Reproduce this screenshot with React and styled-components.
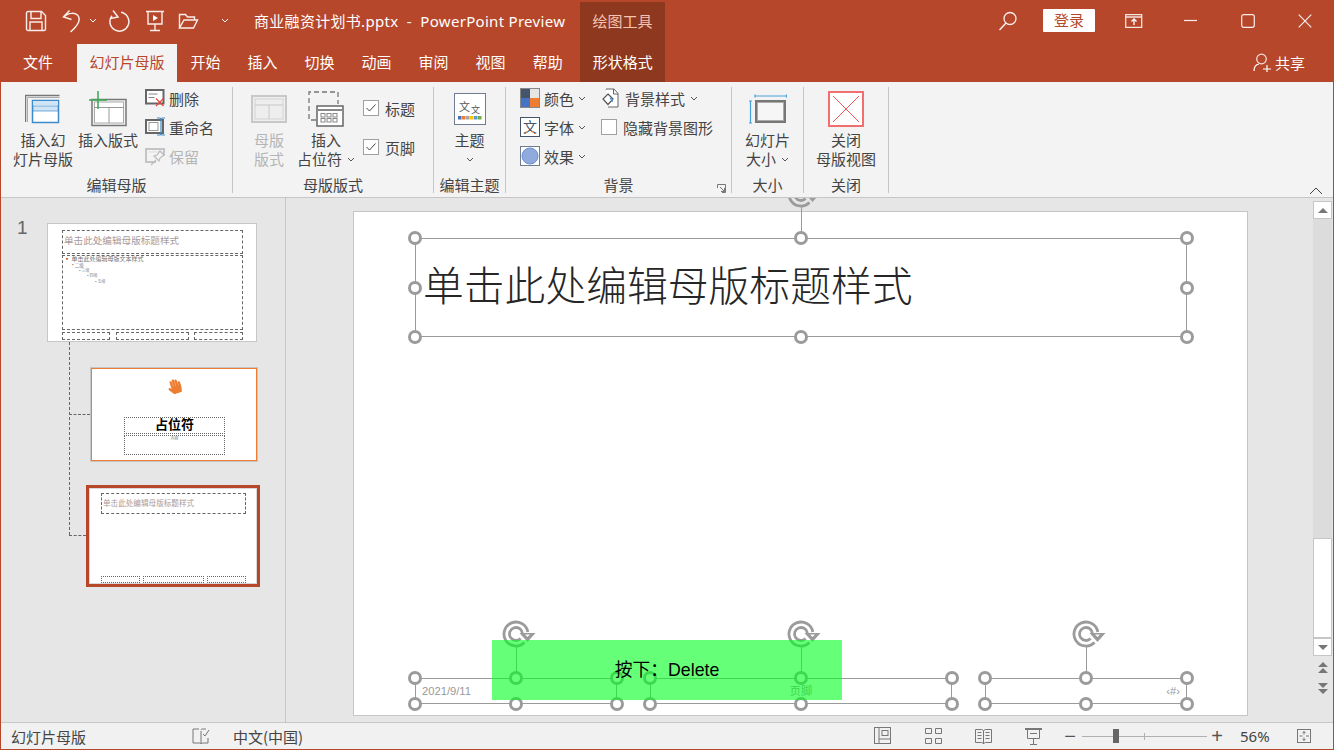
import React from "react";
import styled, { createGlobalStyle } from "styled-components";
import { FaHandPaper } from "react-icons/fa";

const RUST = "#b7472a";
const GRAY = "#9b9b9b";

const GlobalStyle = createGlobalStyle`
	html, body, #root {
		margin: 0;
		padding: 0;
		height: 100%;
		overflow: hidden;
	}
	body {
		font-family: "Noto Sans", "Noto Sans CJK SC", sans-serif;
		font-size: 15px;
		color: #444;
	}
`;

const Svg = ({ w, h, children }) => (
	<svg width={w} height={h} viewBox={`0 0 ${w} ${h}`} fill="none" style={{ display: "block", flex: "none" }}>
		{children}
	</svg>
);

const Chevron = ({ color = "#555" }) => (
	<Svg w={8} h={5}>
		<path d="M1 1l3 3 3-3" stroke={color} />
	</Svg>
);

/* title bar icons */
const SaveIcon = () => (
	<Svg w={22} h={22}>
		<path d="M3 1.500h13.500l4 4V19a1.500 1.500 0 0 1-1.500 1.500H3A1.500 1.500 0 0 1 1.500 19V3A1.500 1.500 0 0 1 3 1.500z" stroke="#fff" opacity=".9" strokeWidth="1.400" />
		<path d="M6 2v6.500h10V2M5 20v-8h12v8" stroke="#fff" opacity=".9" strokeWidth="1.400" />
	</Svg>
);
const UndoIcon = () => (
	<Svg w={20} h={24}>
		<path d="M7.500 1.500L1.500 8l8 2.500M2 8C6 3.500 14 3 16.500 7.500c2.500 5-1.500 10-8 15.500" stroke="#fff" opacity=".9" strokeWidth="1.500" />
	</Svg>
);
const RedoIcon = () => (
	<Svg w={22} h={22}>
		<path d="M13 2.300a9.500 9.500 0 1 1-9 3.400" stroke="#fff" opacity=".9" strokeWidth="1.500" />
		<path d="M5 .5l5 6.500-7.500 1.500" stroke="#fff" opacity=".9" strokeWidth="1.500" />
	</Svg>
);
const PresentIcon = () => (
	<Svg w={20} h={22}>
		<path d="M1 1.500h18M3 2v12h14V2M10 14v6M5 20.500h10" stroke="#fff" opacity=".9" strokeWidth="1.400" />
		<path d="M8 5l5 3-5 3z" fill="#fff" />
	</Svg>
);
const FolderIcon = () => (
	<Svg w={21} h={18}>
		<path d="M1.500 16V2.500h6l2 2.500h7v3M1.500 16h14l4-8H6l-4.500 8z" stroke="#fff" opacity=".9" strokeWidth="1.400" />
	</Svg>
);
const SearchIcon = () => (
	<Svg w={20} h={20}>
		<circle cx="12" cy="7.500" r="6" stroke="#fff" opacity=".9" strokeWidth="1.300" />
		<path d="M8 12l-6.500 7" stroke="#fff" opacity=".9" strokeWidth="1.500" />
	</Svg>
);
const RibbonModeIcon = () => (
	<Svg w={18} h={14}>
		<path d="M.7.7h16v12.600H.7zM1 3h16" stroke="#fff" opacity=".85" strokeWidth="1.300" />
		<path d="M9 11V5.500M6.500 7.500L9 5l2.500 2.500" stroke="#fff" strokeWidth="1.300" />
	</Svg>
);
const MinIcon = () => (
	<Svg w={14} h={14}>
		<path d="M0 6.500h13" stroke="#fff" opacity=".9" strokeWidth="1.200" />
	</Svg>
);
const MaxIcon = () => (
	<Svg w={14} h={14}>
		<rect x=".7" y=".7" width="12.600" height="12.600" rx="2" stroke="#fff" opacity=".9" strokeWidth="1.200" />
	</Svg>
);
const CloseIcon = () => (
	<Svg w={14} h={14}>
		<path d="M.700.700l12.600 12.600M13.300.700L.700 13.300" stroke="#fff" opacity=".9" strokeWidth="1.200" />
	</Svg>
);
const ShareIcon = () => (
	<Svg w={19} h={19}>
		<circle cx="8.500" cy="6" r="4.800" stroke="#fff" opacity=".85" strokeWidth="1.200" />
		<path d="M1 18c0-4 2-6.500 5-7M10 16h8M14 12v7" stroke="#fff" strokeWidth="1.200" />
	</Svg>
);

/* ribbon icons */
const InsertMasterIcon = () => (
	<Svg w={36} h={30}>
		<path d="M.5 28V1.500h34" stroke="#777" strokeWidth="1.500" />
		<path d="M2.500 28V3.500h32" stroke="#aaa" />
		<rect x="7.500" y="6.500" width="26" height="22" fill="#fff" stroke="#3d8bcb" strokeWidth="1.500" />
		<rect x="8" y="7" width="25" height="4" fill="#cfe4f5" />
		<rect x="8" y="12" width="25" height="5" fill="#cfe4f5" stroke="#3d8bcb" strokeWidth=".7" />
	</Svg>
);
const InsertLayoutIcon = () => (
	<Svg w={38} h={36}>
		<rect x="3" y="8.500" width="34" height="26" fill="#f3f3f3" stroke="#777" strokeWidth="1.500" />
		<rect x="5.500" y="11" width="29" height="21" fill="#fff" stroke="#aaa" />
		<path d="M5 16.500h30M20 17v15" stroke="#999" />
		<path d="M9 0v18M0 9h18" stroke="#3aa655" strokeWidth="1.500" />
	</Svg>
);
const DeleteIcon = () => (
	<Svg w={20} h={18}>
		<rect x="1" y="1" width="17.500" height="13.500" fill="#fff" stroke="#666" strokeWidth="2" />
		<path d="M3.500 5h9M3.500 8.500h6" stroke="#888" />
		<path d="M11 9.500l7.500 7.500M18.500 9.500L11 17" stroke="#e8443a" strokeWidth="1.200" />
	</Svg>
);
const RenameIcon = () => (
	<Svg w={20} h={20}>
		<rect x="1" y="3" width="17" height="13" fill="#fff" stroke="#666" strokeWidth="2" />
		<rect x="4" y="5.500" width="9" height="8" stroke="#999" />
		<path d="M12 1h2.500c1 0 1.500.5 1.500 1.500v14c0 1-.5 1.500-1.500 1.500H12M20 1h-2.500c-1 0-1.500.5-1.500 1.500v14c0 1 .5 1.500 1.500 1.500H20" stroke="#3d8bcb" strokeWidth="1.200" />
	</Svg>
);
const KeepIcon = () => (
	<Svg w={20} h={19}>
		<path d="M11 15H1V2h18v7" stroke="#c4c4c4" strokeWidth="2" />
		<path d="M3.500 5h13" stroke="#ddd" />
		<path d="M6 18l5-5M9 9l5 5 1-3 4-3-4-4-3 4z" stroke="#bbb" strokeWidth="1.200" />
	</Svg>
);
const MasterLayoutIcon = () => (
	<Svg w={36} h={28}>
		<rect x="1" y="1" width="34" height="26" fill="#eee" stroke="#c8c8c8" strokeWidth="2" />
		<rect x="4" y="4" width="28" height="20" stroke="#d4d4d4" />
		<path d="M4 10h28M18 10v14" stroke="#c8c8c8" />
	</Svg>
);
const PlaceholderIcon = () => (
	<Svg w={36} h={36}>
		<path d="M8 29H1V1h29v12" stroke="#777" strokeWidth="1.300" strokeDasharray="5 3" />
		<rect x="9" y="15" width="26" height="20" fill="#fff" stroke="#666" strokeWidth="1.500" />
		<path d="M9 19h26" stroke="#888" strokeWidth="2" />
		{[13, 19, 25].map((x) => [22.5, 27.5].map((y) => (
			<rect key={`${x}${y}`} x={x} y={y} width="4" height="3.500" fill="#fff" stroke="#888" />
		)))}
	</Svg>
);
const ThemeIcon = () => (
	<Svg w={32} h={32}>
		<rect x=".5" y=".5" width="31" height="31" fill="#fff" stroke="#6f7d92" />
		<text x="5" y="18" fontSize="11" fill="#555" fontFamily="Noto Sans CJK SC">文</text>
		<text x="17" y="20" fontSize="9" fill="#555" fontFamily="Noto Sans CJK SC">文</text>
		{["#4472c4", "#ed7d31", "#a5a5a5", "#ffc000", "#5b9bd5", "#70ad47"].map((c, i) => (
			<rect key={c} x={4 + i * 4} y="23" width="3.500" height="3.500" fill={c} />
		))}
	</Svg>
);
const ColorsIcon = () => (
	<Svg w={20} h={20}>
		<rect width="10" height="10" fill="#44546a" />
		<rect x="10" width="10" height="10" fill="#e7e6e6" />
		<rect y="10" width="10" height="10" fill="#4472c4" />
		<rect x="10" y="10" width="10" height="10" fill="#ed7d31" />
		<rect x=".5" y=".5" width="19" height="19" stroke="#888" />
	</Svg>
);
const FontsIcon = () => (
	<Svg w={20} h={20}>
		<rect x=".5" y=".5" width="19" height="19" fill="#fff" stroke="#44546a" />
		<text x="3" y="15" fontSize="14" fill="#44546a" fontFamily="Noto Sans CJK SC">文</text>
		<path d="M5 17l3-3M15 17l-3-3" stroke="#ed7d31" />
	</Svg>
);
const EffectsIcon = () => (
	<Svg w={20} h={20}>
		<rect x=".5" y=".5" width="19" height="19" fill="#fff" stroke="#6f7d92" />
		<circle cx="10" cy="10" r="8" fill="#8faadc" stroke="#6d8fd0" />
	</Svg>
);
const BackgroundIcon = () => (
	<Svg w={19} h={20}>
		<path d="M5 1.500V1h8l4 4.500V19H7" fill="#fff" stroke="#666" />
		<path d="M12.500 1v5H17" stroke="#666" />
		<path d="M7 6l5 5-5 5.500-5-5.500z" fill="#fff" stroke="#555" strokeWidth="1.200" />
		<path d="M9 10c2 1 3 2 2 4" stroke="#5b9bd5" strokeWidth="1.500" />
	</Svg>
);
const SlideSizeIcon = () => (
	<Svg w={38} h={30}>
		<path d="M6 2h32M6 .5v3M37.500.5v3M1.500 7v22M0 7h3M0 29h3" stroke="#46a0dc" strokeWidth="1.200" />
		<rect x="6" y="6" width="31" height="23" fill="#777" />
		<rect x="8.500" y="8.500" width="26" height="18" fill="#f6f6f6" stroke="#aaa" />
	</Svg>
);
const CloseViewIcon = () => (
	<Svg w={36} h={36}>
		<rect x="1" y="1" width="34" height="34" fill="#fff" stroke="#f07070" strokeWidth="2" />
		<path d="M5 5l26 26M31 5L5 31" stroke="#f05a5a" />
	</Svg>
);
const LauncherIcon = () => (
	<Svg w={9} h={9}>
		<path d="M.5 4V.5H8.500V8.500H5M3 3l4.500 4.500M7.500 4v3.500H4" stroke="#777" />
	</Svg>
);

/* status bar icons */
const NotesIcon = () => (
	<Svg w={18} h={18}>
		<path d="M7 2H1v14h6c1 0 2 .5 2 1M9 4v13M9 3c0-1 1-1 2-1h3M16 11v5h-5c-1 0-2 .5-2 1" stroke="#777" />
		<path d="M11 7l2 2 4-6" stroke="#777" />
	</Svg>
);
const NormalViewIcon = () => (
	<Svg w={18} h={18}>
		<rect x=".5" y=".5" width="16" height="16" stroke="#777" />
		<path d="M5 1v15M5 12h12" stroke="#777" />
		<rect x="8" y="3.500" width="6" height="5" stroke="#777" />
	</Svg>
);
const SorterIcon = () => (
	<Svg w={17} h={16}>
		<path d="M.5.5h6v5h-6zM10.500.5h6v5h-6zM.5 10.500h6v5h-6zM10.500 10.500h6v5h-6z" stroke="#777" />
	</Svg>
);
const ReadingIcon = () => (
	<Svg w={17} h={17}>
		<path d="M.5 1.500h6l2 1 2-1h6v13h-6l-2 1-2-1h-6zM8.500 3v13M2.500 4.500h4M2.500 7.500h4M2.500 10.500h4M10.500 4.500h4M10.500 7.500h4M10.500 10.500h4" stroke="#777" />
	</Svg>
);
const SlideShowIcon = () => (
	<Svg w={17} h={17}>
		<path d="M0 1h17" stroke="#777" strokeWidth="2" />
		<path d="M2.500 2v8.500h12V2M8.500 10.500V16M5 16.500h7M5 5.500h7" stroke="#777" />
	</Svg>
);
const FitIcon = () => (
	<Svg w={14} h={14}>
		<rect x=".5" y=".5" width="13" height="13" stroke="#777" />
		<path d="M7 2.500v3M5.500 4L7 2.500 8.500 4M7 11.500v-3M5.500 10L7 11.500 8.500 10M2.500 7h3M9 7h3" stroke="#777" />
	</Svg>
);
const RotateIcon = () => (
	<Svg w={34} h={30}>
		<path d="M22.500 23.500A12 12 0 1 1 25.800 12.900" stroke={GRAY} strokeWidth="2.800" />
		<path d="M18.600 19.600A6.500 6.500 0 1 1 20.400 13.900" stroke={GRAY} strokeWidth="2.800" />
		<path d="M17.500 14h16l-8 9z" fill={GRAY} />
		<path d="M23 15.500h5l-2.500 2.500z" fill="#fff" />
	</Svg>
);

const Window = styled.div`
	width: 100vw;
	height: 100vh;
	box-sizing: border-box;
	padding: 0 1px 1px;
	background: ${RUST};
	display: flex;
	flex-direction: column;
	overflow: hidden;
`;

const TitleBar = styled.div`
	height: 44px;
	flex: none;
	display: flex;
	color: #fff;
`;

const QuickBar = styled.div`
	width: 253px;
	box-sizing: border-box;
	padding: 0 0 3px 24px;
	display: flex;
	align-items: center;
`;

const QuickButton = styled.div`
	margin-right: ${(p) => p.$gap}px;
	display: flex;
	align-items: center;
`;

const DocTitle = styled.div`
	width: 326px;
	line-height: 42px;
	letter-spacing: 0.3px;
	white-space: pre;
	color: #fff;
`;

const ContextTitle = styled.div`
	width: 85px;
	margin-top: 2px;
	background: #8f3820;
	color: #f4c4b0;
	text-align: center;
	line-height: 38px;
`;

const TitleRight = styled.div`
	margin-left: auto;
	padding-bottom: 3px;
	display: flex;
	align-items: center;
`;

const SearchButton = styled.div`
	width: 30px;
	margin-right: 20px;
	display: flex;
	justify-content: center;
`;

const LoginButton = styled.div`
	width: 52px;
	height: 23px;
	margin-right: 10px;
	border-radius: 1px;
	background: #fff;
	color: ${RUST};
	text-align: center;
	line-height: 23px;
`;

const WindowButton = styled.div`
	width: 57px;
	display: flex;
	justify-content: center;
`;

const TabBar = styled.div`
	height: 38px;
	flex: none;
	display: flex;
	color: #fff;
	padding-left: 8px;
`;

const Tab = styled.div`
	padding: 0 ${(p) => p.$pad ?? 13.5}px;
	margin-right: ${(p) => p.$after ?? 0}px;
	line-height: 36px;
	white-space: nowrap;
	background: ${(p) => (p.$active ? "#f3f3f3" : p.$context ? "#8f3820" : "transparent")};
	color: ${(p) => (p.$active ? RUST : "#fff")};
`;

const ShareButton = styled.div`
	margin-left: auto;
	margin-right: 28px;
	padding-bottom: 1px;
	display: flex;
	align-items: center;
	gap: 3px;
`;

const Ribbon = styled.div`
	height: 116px;
	flex: none;
	box-sizing: border-box;
	position: relative;
	display: flex;
	padding-top: 5px;
	background: #f3f3f3;
	border-bottom: 1px solid #c6c6c6;
`;

const Group = styled.div`
	width: ${(p) => p.$w}px;
	height: 106px;
	flex: none;
	box-sizing: border-box;
	position: relative;
	border-right: 1px solid #c6c6c6;
`;

const GroupBody = styled.div`
	height: 89px;
	display: flex;
	padding-left: ${(p) => p.$pad ?? 0}px;
`;

const GroupLabel = styled.div`
	line-height: 19px;
	text-align: center;
	white-space: nowrap;
`;

const Launcher = styled.div`
	position: absolute;
	right: 5px;
	bottom: 0;
`;

const BigButton = styled.div`
	width: ${(p) => p.$w}px;
	margin-left: ${(p) => p.$left ?? 0}px;
	flex: none;
	display: flex;
	flex-direction: column;
	align-items: center;
	line-height: 19px;
	text-align: center;
	color: ${(p) => (p.$off ? "#b5b5b5" : "#444")};
`;

const BigIcon = styled.div`
	height: 44px;
	display: flex;
	align-items: center;
`;

const ChevLine = styled.div`
	height: 19px;
	display: flex;
	align-items: center;
	justify-content: center;
	gap: 5px;
	white-space: nowrap;
`;

const SmallColumn = styled.div`
	width: ${(p) => p.$w ?? "auto"}${(p) => (p.$w ? "px" : "")};
	margin-left: ${(p) => p.$left ?? 0}px;
	padding-top: ${(p) => p.$top ?? 1}px;
	flex: none;
	display: flex;
	flex-direction: column;
	gap: ${(p) => p.$gap ?? 9}px;
`;

const SmallButton = styled.div`
	height: 20px;
	display: flex;
	align-items: center;
	gap: ${(p) => p.$gap ?? 4}px;
	white-space: nowrap;
	color: ${(p) => (p.$off ? "#b5b5b5" : "#444")};
`;

const CheckBox = styled.div`
	width: 16px;
	height: 16px;
	flex: none;
	box-sizing: border-box;
	border: 1px solid #a0a0a0;
	background: #fff;
	display: flex;
	align-items: center;
	justify-content: center;
`;

const CollapseButton = styled.div`
	position: absolute;
	right: 10px;
	bottom: 2px;
`;

const Main = styled.div`
	flex: 1;
	min-height: 0;
	display: flex;
	background: #e6e6e6;
`;

const ThumbPane = styled.div`
	width: 285px;
	flex: none;
	box-sizing: border-box;
	position: relative;
	padding-top: 25px;
	border-right: 1px solid #c6c6c6;
`;

const SlideNumber = styled.div`
	position: absolute;
	left: 16px;
	top: 19px;
	font-family: "Liberation Sans", sans-serif;
	font-size: 19px;
	color: #666;
`;

const Connector = styled.div`
	position: absolute;
	left: ${(p) => p.$x}px;
	top: ${(p) => p.$y}px;
	width: ${(p) => p.$w ?? 0}px;
	height: ${(p) => p.$h ?? 0}px;
	border-left: ${(p) => (p.$h ? "1px dashed #666" : "none")};
	border-top: ${(p) => (p.$w ? "1px dashed #666" : "none")};
`;

const Thumb = styled.div`
	width: ${(p) => p.$w}px;
	height: ${(p) => p.$h}px;
	margin-left: ${(p) => p.$left}px;
	margin-bottom: ${(p) => p.$after ?? 0}px;
	box-sizing: border-box;
	position: relative;
	background: #fff;
	border: ${(p) => p.$border};
	box-shadow: ${(p) => p.$ring ?? "none"};
`;

const MiniBox = styled.div`
	position: absolute;
	left: ${(p) => p.$x}px;
	top: ${(p) => p.$y}px;
	width: ${(p) => p.$w}px;
	height: ${(p) => p.$h}px;
	box-sizing: border-box;
	border: 1px ${(p) => p.$line ?? "dashed"} #666;
`;

const MiniText = styled.div`
	position: absolute;
	left: ${(p) => p.$x}px;
	top: ${(p) => p.$y}px;
	width: ${(p) => p.$w ?? "auto"}${(p) => (p.$w ? "px" : "")};
	text-align: ${(p) => (p.$w ? "center" : "left")};
	font-size: ${(p) => p.$size}px;
	font-weight: ${(p) => p.$weight ?? 400};
	line-height: 1;
	white-space: nowrap;
	color: ${(p) => p.$color ?? "#a89a9a"};
`;

const Bullet = styled.span`
	color: ${(p) => p.$color};
`;

const MiniIcon = styled.div`
	position: absolute;
	left: ${(p) => p.$x}px;
	top: ${(p) => p.$y}px;
	color: #ed7d31;
	transform: rotate(-18deg);
	display: flex;
`;

const Editor = styled.div`
	flex: 1;
	min-width: 0;
	box-sizing: border-box;
	padding: 13px 0 0 67px;
	overflow: hidden;
`;

const Slide = styled.div`
	width: 895px;
	height: 505px;
	box-sizing: border-box;
	position: relative;
	background: #fff;
	border: 1px solid #c6c6c6;
`;

const Frame = styled.div`
	position: absolute;
	left: ${(p) => p.$x}px;
	top: ${(p) => p.$y}px;
	width: ${(p) => p.$w}px;
	height: ${(p) => p.$h}px;
	box-shadow: inset 0 0 0 1px ${GRAY};
`;

const Handle = styled.div`
	position: absolute;
	left: ${(p) => p.$l};
	top: ${(p) => p.$t};
	width: 14px;
	height: 14px;
	margin: -7px 0 0 -7px;
	box-sizing: border-box;
	border-radius: 50%;
	border: 3px solid ${GRAY};
	background: #fff;
`;

const RotateArm = styled.div`
	position: absolute;
	left: 50%;
	top: -31px;
	width: 1px;
	height: 31px;
	background: ${GRAY};
`;

const RotateHandle = styled.div`
	position: absolute;
	left: 50%;
	top: -59px;
	margin-left: -14px;
`;

const TitleText = styled.div`
	padding: 0 0 0 8px;
	line-height: 95px;
	font-size: 40.8px;
	font-weight: 300;
	color: #262626;
	white-space: nowrap;
`;

const FooterText = styled.div`
	position: absolute;
	top: 6px;
	${(p) => (p.$side === "right" ? "right: 7px;" : p.$side === "center" ? "left: 0; right: 0; text-align: center;" : "left: 7px;")}
	font-family: "Liberation Sans", "Noto Sans CJK SC", sans-serif;
	font-size: 11.2px;
	line-height: 14px;
	color: #999;
`;

const KeyOverlay = styled.div`
	position: absolute;
	left: 138px;
	top: 428px;
	width: 350px;
	height: 60px;
	background: rgba(0, 255, 30, 0.6);
	font-family: "Liberation Sans", "Noto Sans CJK SC", sans-serif;
	font-size: 17.8px;
	line-height: 60px;
	text-align: center;
	color: #000;
`;

const ScrollBar = styled.div`
	width: 20px;
	flex: none;
	box-sizing: border-box;
	padding: 3px 1px 0 0;
	display: flex;
	flex-direction: column;
	align-items: stretch;
`;

const ScrollTrack = styled.div`
	height: 319px;
	background: #dcdcdc;
`;

const ScrollThumb = styled.div`
	height: 100px;
	box-sizing: border-box;
	background: #fff;
	border: 1px solid #c6c6c6;
`;

const ScrollButton = styled.div`
	height: 18px;
	flex: none;
	box-sizing: border-box;
	background: #fff;
	border: 1px solid #c6c6c6;
	display: flex;
	align-items: center;
	justify-content: center;
`;

const PageButton = styled.div`
	height: 21px;
	flex: none;
	margin-top: ${(p) => p.$top ?? 0}px;
	display: flex;
	align-items: center;
	justify-content: center;
`;

const StatusBar = styled.div`
	height: 27px;
	flex: none;
	box-sizing: border-box;
	display: flex;
	align-items: center;
	padding-left: 10px;
	background: #f1f1f1;
	border-top: 1px solid #c6c6c6;
`;

const StatusText = styled.div`
	margin-left: ${(p) => p.$left ?? 0}px;
	font-family: "Noto Sans CJK SC", sans-serif;
	white-space: nowrap;
`;

const NotesButton = styled.div`
	margin-left: 106px;
`;

const StatusRight = styled.div`
	margin-left: auto;
	padding-right: 22px;
	display: flex;
	align-items: center;
`;

const ViewButton = styled.div`
	width: 50px;
	display: flex;
	justify-content: center;
`;

const ZoomButton = styled.div`
	width: ${(p) => p.$w}px;
	font-family: "Liberation Sans", sans-serif;
	font-size: 20px;
	font-weight: 300;
	line-height: 20px;
	text-align: center;
	color: #555;
`;

const ZoomSlider = styled.div`
	width: 125px;
	height: 1px;
	position: relative;
	background: #b0b0b0;
`;

const ZoomThumb = styled.div`
	position: absolute;
	left: 31px;
	top: -7px;
	width: 6px;
	height: 14px;
	background: #666;
`;

const ZoomTick = styled.div`
	position: absolute;
	left: 62px;
	top: -3px;
	width: 1px;
	height: 7px;
	background: #b0b0b0;
`;

const ZoomValue = styled.div`
	width: 30px;
	margin: 0 27px 0 13px;
	font-size: 15px;
	white-space: nowrap;
`;

const HANDLE_SPOTS = [
	["0%", "0%"],
	["50%", "0%"],
	["100%", "0%"],
	["0%", "50%"],
	["100%", "50%"],
	["0%", "100%"],
	["50%", "100%"],
	["100%", "100%"],
];

function SelectedFrame({ x, y, w, h, sideHandles = true, children }) {
	return (
		<Frame $x={x} $y={y} $w={w} $h={h}>
			{children}
			<RotateArm />
			<RotateHandle>
				<RotateIcon />
			</RotateHandle>
			{HANDLE_SPOTS.filter(([, t]) => sideHandles || t !== "50%").map(([l, t]) => (
				<Handle key={l + t} $l={l} $t={t} />
			))}
		</Frame>
	);
}

function CheckMark() {
	return (
		<Svg w={10} h={8}>
			<path d="M.5 4l3 3 6-6.500" stroke="#444" />
		</Svg>
	);
}

function App() {
	return (
		<Window>
			<GlobalStyle />
			<TitleBar>
				<QuickBar>
					<QuickButton $gap={15}><SaveIcon /></QuickButton>
					<QuickButton $gap={7}><UndoIcon /></QuickButton>
					<QuickButton $gap={11}><Chevron color="#fff" /></QuickButton>
					<QuickButton $gap={15}><RedoIcon /></QuickButton>
					<QuickButton $gap={13}><PresentIcon /></QuickButton>
					<QuickButton $gap={22}><FolderIcon /></QuickButton>
					<QuickButton $gap={0}><Chevron color="#fff" /></QuickButton>
				</QuickBar>
				<DocTitle>商业融资计划书.pptx  -  PowerPoint Preview</DocTitle>
				<ContextTitle>绘图工具</ContextTitle>
				<TitleRight>
					<SearchButton><SearchIcon /></SearchButton>
					<LoginButton>登录</LoginButton>
					<WindowButton><RibbonModeIcon /></WindowButton>
					<WindowButton><MinIcon /></WindowButton>
					<WindowButton><MaxIcon /></WindowButton>
					<WindowButton><CloseIcon /></WindowButton>
				</TitleRight>
			</TitleBar>

			<TabBar>
				<Tab $after={10} $pad={14}>文件</Tab>
				<Tab $active $pad={12.5}>幻灯片母版</Tab>
				<Tab>开始</Tab>
				<Tab>插入</Tab>
				<Tab>切换</Tab>
				<Tab>动画</Tab>
				<Tab>审阅</Tab>
				<Tab>视图</Tab>
				<Tab $after={4}>帮助</Tab>
				<Tab $context $pad={12.5}>形状格式</Tab>
				<ShareButton><ShareIcon />共享</ShareButton>
			</TabBar>

			<Ribbon>
				<Group $w={232}>
					<GroupBody>
						<BigButton $w={62} $left={11}>
							<BigIcon><InsertMasterIcon /></BigIcon>
							插入幻<br />灯片母版
						</BigButton>
						<BigButton $w={60} $left={4}>
							<BigIcon><InsertLayoutIcon /></BigIcon>
							插入版式
						</BigButton>
						<SmallColumn $left={7}>
							<SmallButton><DeleteIcon />删除</SmallButton>
							<SmallButton><RenameIcon />重命名</SmallButton>
							<SmallButton $off><KeepIcon />保留</SmallButton>
						</SmallColumn>
					</GroupBody>
					<GroupLabel>编辑母版</GroupLabel>
				</Group>
				<Group $w={201}>
					<GroupBody>
						<BigButton $w={40} $left={16} $off>
							<BigIcon><MasterLayoutIcon /></BigIcon>
							母版<br />版式
						</BigButton>
						<BigButton $w={60} $left={7}>
							<BigIcon><PlaceholderIcon /></BigIcon>
							插入
							<ChevLine>占位符<Chevron /></ChevLine>
						</BigButton>
						<SmallColumn $left={7} $top={11} $gap={19}>
							<SmallButton $gap={6}><CheckBox><CheckMark /></CheckBox>标题</SmallButton>
							<SmallButton $gap={6}><CheckBox><CheckMark /></CheckBox>页脚</SmallButton>
						</SmallColumn>
					</GroupBody>
					<GroupLabel>母版版式</GroupLabel>
				</Group>
				<Group $w={72}>
					<GroupBody>
						<BigButton $w={71}>
							<BigIcon><ThemeIcon /></BigIcon>
							主题
							<ChevLine><Chevron /></ChevLine>
						</BigButton>
					</GroupBody>
					<GroupLabel>编辑主题</GroupLabel>
				</Group>
				<Group $w={226}>
					<GroupBody $pad={14}>
						<SmallColumn $w={81}>
							<SmallButton><ColorsIcon />颜色<Chevron /></SmallButton>
							<SmallButton><FontsIcon />字体<Chevron /></SmallButton>
							<SmallButton><EffectsIcon />效果<Chevron /></SmallButton>
						</SmallColumn>
						<SmallColumn>
							<SmallButton $gap={5}><BackgroundIcon />背景样式<Chevron /></SmallButton>
							<SmallButton $gap={6}><CheckBox />隐藏背景图形</SmallButton>
						</SmallColumn>
					</GroupBody>
					<GroupLabel>背景</GroupLabel>
					<Launcher><LauncherIcon /></Launcher>
				</Group>
				<Group $w={72}>
					<GroupBody>
						<BigButton $w={71}>
							<BigIcon><SlideSizeIcon /></BigIcon>
							幻灯片
							<ChevLine>大小<Chevron /></ChevLine>
						</BigButton>
					</GroupBody>
					<GroupLabel>大小</GroupLabel>
				</Group>
				<Group $w={85}>
					<GroupBody>
						<BigButton $w={84}>
							<BigIcon><CloseViewIcon /></BigIcon>
							关闭<br />母版视图
						</BigButton>
					</GroupBody>
					<GroupLabel>关闭</GroupLabel>
				</Group>
				<CollapseButton>
					<Svg w={14} h={8}>
						<path d="M1 7l6-6 6 6" stroke="#444" />
					</Svg>
				</CollapseButton>
			</Ribbon>

			<Main>
				<ThumbPane>
					<SlideNumber>1</SlideNumber>
					<Connector $x={68} $y={144} $h={193} />
					<Connector $x={68} $y={216} $w={21} />
					<Connector $x={68} $y={337} $w={17} />

					<Thumb $w={210} $h={119} $left={46} $after={26} $border="1px solid #c6c6c6">
						<MiniBox $x={14} $y={6} $w={181} $h={24} />
						<MiniBox $x={14} $y={31} $w={181} $h={75} />
						<MiniBox $x={14} $y={108} $w={48} $h={8} />
						<MiniBox $x={68} $y={108} $w={73} $h={8} />
						<MiniBox $x={146} $y={108} $w={49} $h={8} />
						<MiniText $x={16} $y={12} $size={9.6}>单击此处编辑母版标题样式</MiniText>
						<MiniText $x={16} $y={32} $size={6} $color="#777"><Bullet $color="#b7472a">▪</Bullet> 单击此处编辑母版文本样式</MiniText>
						<MiniText $x={24} $y={39} $size={4.5} $color="#888"><Bullet $color="#b7472a">•</Bullet> 二级</MiniText>
						<MiniText $x={31} $y={45} $size={4} $color="#888"><Bullet $color="#2b5fc4">•</Bullet> 三级</MiniText>
						<MiniText $x={39} $y={50} $size={4} $color="#888"><Bullet $color="#2b5fc4">•</Bullet> 四级</MiniText>
						<MiniText $x={47} $y={56} $size={4} $color="#888"><Bullet $color="#2b5fc4">•</Bullet> 五级</MiniText>
					</Thumb>

					<Thumb $w={166} $h={93} $left={90} $after={24} $border="1px solid #ed7d31" $ring="0 0 0 1px #c6c6c6">
						<MiniIcon $x={75} $y={10}><FaHandPaper size={15} /></MiniIcon>
						<MiniBox $x={32} $y={48} $w={101} $h={17} $line="dotted" />
						<MiniBox $x={32} $y={66} $w={101} $h={20} $line="dotted" />
						<MiniText $x={32} $y={49} $w={101} $size={13} $weight={700} $color="#000">占位符</MiniText>
						<MiniText $x={32} $y={68} $w={101} $size={4} $color="#888">内容</MiniText>
					</Thumb>

					<Thumb $w={174} $h={102} $left={85} $border={`3px solid ${RUST}`} $ring="inset 0 0 0 1px #d8d8d8">
						<MiniBox $x={12} $y={5} $w={145} $h={21} />
						<MiniBox $x={12} $y={88} $w={39} $h={7} $line="dotted" />
						<MiniBox $x={54} $y={88} $w={61} $h={7} $line="dotted" />
						<MiniBox $x={118} $y={88} $w={39} $h={7} $line="dotted" />
						<MiniText $x={14} $y={12} $size={7.6}>单击此处编辑母版标题样式</MiniText>
					</Thumb>
				</ThumbPane>

				<Editor>
					<Slide>
						<SelectedFrame x={61} y={26} w={772} h={99}>
							<TitleText>单击此处编辑母版标题样式</TitleText>
						</SelectedFrame>
						<SelectedFrame x={61} y={466} w={202} h={26} sideHandles={false}>
							<FooterText>2021/9/11</FooterText>
						</SelectedFrame>
						<SelectedFrame x={296} y={466} w={302} h={26} sideHandles={false}>
							<FooterText $side="center">页脚</FooterText>
						</SelectedFrame>
						<SelectedFrame x={631} y={466} w={202} h={26} sideHandles={false}>
							<FooterText $side="right">‹#›</FooterText>
						</SelectedFrame>
						<KeyOverlay>按下：Delete</KeyOverlay>
					</Slide>
				</Editor>

				<ScrollBar>
					<ScrollButton>
						<Svg w={10} h={5}><path d="M0 5l5-5 5 5z" fill="#777" /></Svg>
					</ScrollButton>
					<ScrollTrack />
					<ScrollThumb />
					<ScrollButton>
						<Svg w={10} h={5}><path d="M0 0l5 5 5-5z" fill="#777" /></Svg>
					</ScrollButton>
					<PageButton $top={1}>
						<Svg w={10} h={11}><path d="M0 5l5-5 5 5zM0 11l5-5 5 5z" fill="#777" /></Svg>
					</PageButton>
					<PageButton>
						<Svg w={10} h={11}><path d="M0 0l5 5 5-5zM0 6l5 5 5-5z" fill="#777" /></Svg>
					</PageButton>
				</ScrollBar>
			</Main>

			<StatusBar>
				<StatusText>幻灯片母版</StatusText>
				<NotesButton><NotesIcon /></NotesButton>
				<StatusText $left={23}>中文(中国)</StatusText>
				<StatusRight>
					<ViewButton><NormalViewIcon /></ViewButton>
					<ViewButton><SorterIcon /></ViewButton>
					<ViewButton><ReadingIcon /></ViewButton>
					<ViewButton><SlideShowIcon /></ViewButton>
					<ZoomButton $w={24}>−</ZoomButton>
					<ZoomSlider>
						<ZoomTick />
						<ZoomThumb />
					</ZoomSlider>
					<ZoomButton $w={20}>+</ZoomButton>
					<ZoomValue>56%</ZoomValue>
					<FitIcon />
				</StatusRight>
			</StatusBar>
		</Window>
	);
}

export default App;
